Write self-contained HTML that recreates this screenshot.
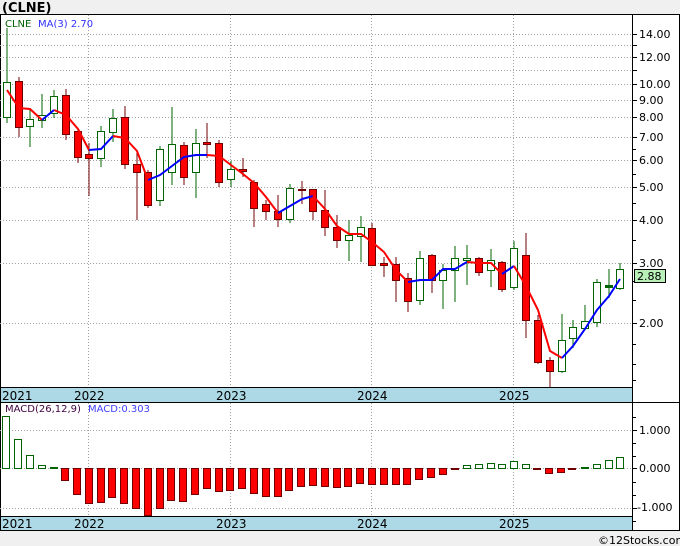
<!DOCTYPE html>
<html><head><meta charset="utf-8"><style>
html,body{margin:0;padding:0;background:#f0f0f0;width:680px;height:546px;overflow:hidden}
svg{display:block}
text{font-family:"DejaVu Sans","Liberation Sans",sans-serif}
</style></head><body>
<svg width="680" height="546" viewBox="0 0 680 546" xmlns="http://www.w3.org/2000/svg">
<rect x="0" y="0" width="680" height="546" fill="#f0f0f0"/>
<text x="2" y="12" font-size="13" font-weight="bold" fill="#000">(CLNE)</text>
<rect x="0.5" y="14.5" width="679" height="388" fill="#fff" stroke="#000"/>
<g stroke="#a0a0a0" stroke-dasharray="1,2" stroke-width="1">
<line x1="0" x2="632" y1="34.5" y2="34.5"/><line x1="0" x2="632" y1="45.5" y2="45.5"/><line x1="0" x2="632" y1="57.5" y2="57.5"/><line x1="0" x2="632" y1="70.5" y2="70.5"/><line x1="0" x2="632" y1="84.5" y2="84.5"/><line x1="0" x2="632" y1="100.5" y2="100.5"/><line x1="0" x2="632" y1="117.5" y2="117.5"/><line x1="0" x2="632" y1="137.5" y2="137.5"/><line x1="0" x2="632" y1="160.5" y2="160.5"/><line x1="0" x2="632" y1="187.5" y2="187.5"/><line x1="0" x2="632" y1="220.5" y2="220.5"/><line x1="0" x2="632" y1="263.5" y2="263.5"/><line x1="0" x2="632" y1="323.5" y2="323.5"/>
<line x1="88.5" x2="88.5" y1="15" y2="387"/><line x1="230.5" x2="230.5" y1="15" y2="387"/><line x1="371.5" x2="371.5" y1="15" y2="387"/><line x1="513.5" x2="513.5" y1="15" y2="387"/>
</g>
<line x1="632.5" x2="632.5" y1="14" y2="403" stroke="#000"/>
<g stroke="#000"><line x1="632" x2="637" y1="34.5" y2="34.5"/><line x1="632" x2="637" y1="45.5" y2="45.5"/><line x1="632" x2="637" y1="57.5" y2="57.5"/><line x1="632" x2="637" y1="70.5" y2="70.5"/><line x1="632" x2="637" y1="84.5" y2="84.5"/><line x1="632" x2="637" y1="100.5" y2="100.5"/><line x1="632" x2="637" y1="117.5" y2="117.5"/><line x1="632" x2="637" y1="137.5" y2="137.5"/><line x1="632" x2="637" y1="160.5" y2="160.5"/><line x1="632" x2="637" y1="187.5" y2="187.5"/><line x1="632" x2="637" y1="220.5" y2="220.5"/><line x1="632" x2="637" y1="263.5" y2="263.5"/><line x1="632" x2="637" y1="323.5" y2="323.5"/>
<line x1="632" x2="636" y1="149.5" y2="149.5"/><line x1="632" x2="636" y1="174.5" y2="174.5"/><line x1="632" x2="636" y1="203.5" y2="203.5"/><line x1="632" x2="636" y1="240.5" y2="240.5"/><line x1="632" x2="636" y1="281.5" y2="281.5"/><line x1="632" x2="636" y1="300.5" y2="300.5"/><line x1="632" x2="636" y1="344.5" y2="344.5"/><line x1="632" x2="636" y1="364.5" y2="364.5"/><line x1="632" x2="636" y1="380.5" y2="380.5"/></g>
<g font-size="11" fill="#000">
<text x="639" y="38">14.00</text><text x="639" y="61">12.00</text><text x="639" y="88">10.00</text><text x="639" y="104">9.00</text><text x="639" y="121">8.00</text><text x="639" y="141">7.00</text><text x="639" y="164">6.00</text><text x="639" y="191">5.00</text><text x="639" y="224">4.00</text><text x="639" y="267">3.00</text><text x="639" y="327">2.00</text>
</g>
<rect x="634.5" y="269.5" width="31" height="13" fill="#b8f0b8" stroke="#000"/>
<text x="637" y="280" font-size="11" fill="#000">2.88</text>
<text x="5" y="27" font-size="10" fill="#006400">CLNE</text>
<text x="38" y="27" font-size="10" fill="#3030ff">MA(3)  2.70</text>
<g stroke-width="1">
<g stroke="#006400" fill="#fff">
<line x1="7" x2="7" y1="28" y2="123"/><rect x="3.5" y="82.5" width="7" height="35"/>
<line x1="30" x2="30" y1="110" y2="147"/><rect x="26.5" y="119.5" width="7" height="7"/>
<line x1="42" x2="42" y1="94" y2="128"/><rect x="38.5" y="115.5" width="7" height="5"/>
<line x1="54" x2="54" y1="90" y2="118"/><rect x="50.5" y="96.5" width="7" height="17"/>
<line x1="101" x2="101" y1="126" y2="167"/><rect x="97.5" y="131.5" width="7" height="27"/>
<line x1="113" x2="113" y1="109" y2="142"/><rect x="109.5" y="118.5" width="7" height="14"/>
<line x1="160" x2="160" y1="146" y2="206"/><rect x="156.5" y="149.5" width="7" height="51"/>
<line x1="172" x2="172" y1="107" y2="185"/><rect x="168.5" y="144.5" width="7" height="28"/>
<line x1="196" x2="196" y1="129" y2="198"/><rect x="192.5" y="143.5" width="7" height="29"/>
<line x1="231" x2="231" y1="161" y2="187"/><rect x="227.5" y="169.5" width="7" height="10"/>
<line x1="290" x2="290" y1="184" y2="223"/><rect x="286.5" y="188.5" width="7" height="31"/>
<line x1="349" x2="349" y1="220" y2="261"/><rect x="345.5" y="235.5" width="7" height="5"/>
<line x1="361" x2="361" y1="216" y2="262"/><rect x="357.5" y="227.5" width="7" height="9"/>
<line x1="420" x2="420" y1="251" y2="305"/><rect x="416.5" y="258.5" width="7" height="42"/>
<line x1="443" x2="443" y1="264" y2="309"/><rect x="439.5" y="270.5" width="7" height="10"/>
<line x1="455" x2="455" y1="246" y2="302"/><rect x="451.5" y="258.5" width="7" height="12"/>
<line x1="467" x2="467" y1="245" y2="285"/><rect x="463.5" y="258.5" width="7" height="2"/>
<line x1="491" x2="491" y1="249" y2="287"/><rect x="487.5" y="260.5" width="7" height="10"/>
<line x1="514" x2="514" y1="241" y2="290"/><rect x="510.5" y="248.5" width="7" height="39"/>
<line x1="562" x2="562" y1="314" y2="373"/><rect x="558.5" y="340.5" width="7" height="31"/>
<line x1="573" x2="573" y1="320" y2="348"/><rect x="569.5" y="327.5" width="7" height="11"/>
<line x1="585" x2="585" y1="305" y2="330"/><rect x="581.5" y="321.5" width="7" height="7"/>
<line x1="597" x2="597" y1="279" y2="327"/><rect x="593.5" y="282.5" width="7" height="40"/>
<line x1="609" x2="609" y1="269" y2="298"/><rect x="605.5" y="285.5" width="7" height="2" fill="#006400"/>
<line x1="620" x2="620" y1="263" y2="290"/><rect x="616.5" y="269.5" width="7" height="19"/>
</g>
<g stroke="#700000" fill="#ff0000">
<line x1="19" x2="19" y1="77" y2="137"/><rect x="15.5" y="81.5" width="7" height="46"/>
<line x1="66" x2="66" y1="89" y2="140"/><rect x="62.5" y="95.5" width="7" height="39"/>
<line x1="78" x2="78" y1="128" y2="163"/><rect x="74.5" y="131.5" width="7" height="26"/>
<line x1="89" x2="89" y1="143" y2="196"/><rect x="85.5" y="154.5" width="7" height="4"/>
<line x1="125" x2="125" y1="106" y2="169"/><rect x="121.5" y="117.5" width="7" height="47"/>
<line x1="137" x2="137" y1="150" y2="220"/><rect x="133.5" y="164.5" width="7" height="8"/>
<line x1="148" x2="148" y1="170" y2="208"/><rect x="144.5" y="172.5" width="7" height="33"/>
<line x1="184" x2="184" y1="142" y2="185"/><rect x="180.5" y="145.5" width="7" height="32"/>
<line x1="207" x2="207" y1="123" y2="158"/><rect x="203.5" y="142.5" width="7" height="2"/>
<line x1="219" x2="219" y1="140" y2="187"/><rect x="215.5" y="143.5" width="7" height="39"/>
<line x1="243" x2="243" y1="158" y2="177"/><rect x="239.5" y="169.5" width="7" height="2"/>
<line x1="254" x2="254" y1="180" y2="227"/><rect x="250.5" y="182.5" width="7" height="26"/>
<line x1="266" x2="266" y1="200" y2="220"/><rect x="262.5" y="204.5" width="7" height="7"/>
<line x1="278" x2="278" y1="195" y2="227"/><rect x="274.5" y="211.5" width="7" height="8"/>
<line x1="302" x2="302" y1="181" y2="204"/><rect x="298.5" y="189.5" width="7" height="1"/>
<line x1="313" x2="313" y1="189" y2="220"/><rect x="309.5" y="189.5" width="7" height="22"/>
<line x1="325" x2="325" y1="190" y2="236"/><rect x="321.5" y="210.5" width="7" height="17"/>
<line x1="337" x2="337" y1="215" y2="248"/><rect x="333.5" y="227.5" width="7" height="13"/>
<line x1="372" x2="372" y1="223" y2="265"/><rect x="368.5" y="228.5" width="7" height="37"/>
<line x1="384" x2="384" y1="257" y2="277"/><rect x="380.5" y="263.5" width="7" height="2"/>
<line x1="396" x2="396" y1="257" y2="302"/><rect x="392.5" y="264.5" width="7" height="16"/>
<line x1="408" x2="408" y1="273" y2="312"/><rect x="404.5" y="278.5" width="7" height="23"/>
<line x1="432" x2="432" y1="254" y2="293"/><rect x="428.5" y="255.5" width="7" height="25"/>
<line x1="479" x2="479" y1="257" y2="276"/><rect x="475.5" y="258.5" width="7" height="14"/>
<line x1="502" x2="502" y1="261" y2="292"/><rect x="498.5" y="262.5" width="7" height="27"/>
<line x1="526" x2="526" y1="233" y2="338"/><rect x="522.5" y="255.5" width="7" height="65"/>
<line x1="538" x2="538" y1="315" y2="364"/><rect x="534.5" y="320.5" width="7" height="42"/>
<line x1="550" x2="550" y1="357" y2="387"/><rect x="546.5" y="360.5" width="7" height="11"/>
</g>
</g>
<polyline fill="none" stroke="#ff0000" stroke-width="2" points="7,90 19,108 30,109 42,120"/>
<polyline fill="none" stroke="#ff0000" stroke-width="2" points="54,110 66,115 78,129 89,150"/>
<polyline fill="none" stroke="#0000ff" stroke-width="2" points="42,120 54,110"/>
<polyline fill="none" stroke="#0000ff" stroke-width="2" points="89,150 101,149 113,136"/>
<polyline fill="none" stroke="#ff0000" stroke-width="2" points="113,136 125,138 137,151 148,180"/>
<polyline fill="none" stroke="#0000ff" stroke-width="2" points="148,180 160,175 172,166 184,157 196,155 207,155"/>
<polyline fill="none" stroke="#ff0000" stroke-width="2" points="207,155 219,156 231,165 243,174 254,183 266,197 278,213"/>
<polyline fill="none" stroke="#0000ff" stroke-width="2" points="278,213 290,206 302,199 313,196"/>
<polyline fill="none" stroke="#ff0000" stroke-width="2" points="313,196 325,209 337,226 349,234 361,234 372,242 384,252 396,270 408,282"/>
<polyline fill="none" stroke="#0000ff" stroke-width="2" points="408,282 420,280 432,280 443,269 455,269 467,262"/>
<polyline fill="none" stroke="#ff0000" stroke-width="2" points="467,262 479,263 491,263 502,274"/>
<polyline fill="none" stroke="#0000ff" stroke-width="2" points="502,274 514,266"/>
<polyline fill="none" stroke="#ff0000" stroke-width="2" points="514,266 526,286 538,310 550,351 562,358"/>
<polyline fill="none" stroke="#0000ff" stroke-width="2" points="562,358 573,346 585,329 597,310 609,296 620,279"/>
<rect x="0.5" y="387.5" width="632" height="15" fill="#add8e6" stroke="#000"/>
<g font-size="12" fill="#000"><text x="2" y="400">2021</text><text x="74" y="400">2022</text><text x="216" y="400">2023</text><text x="357" y="400">2024</text><text x="499" y="400">2025</text></g>
<rect x="0.5" y="402.5" width="679" height="128" fill="#fff" stroke="#000"/>
<g stroke="#a0a0a0" stroke-dasharray="1,2"><line x1="0" x2="632" y1="430.5" y2="430.5"/><line x1="0" x2="632" y1="468.5" y2="468.5"/><line x1="0" x2="632" y1="508.5" y2="508.5"/>
<line x1="88.5" x2="88.5" y1="403" y2="516"/><line x1="230.5" x2="230.5" y1="403" y2="516"/><line x1="371.5" x2="371.5" y1="403" y2="516"/><line x1="513.5" x2="513.5" y1="403" y2="516"/></g>
<line x1="632.5" x2="632.5" y1="402" y2="531" stroke="#000"/>
<g stroke="#000"><line x1="632" x2="637" y1="430.5" y2="430.5"/><line x1="632" x2="637" y1="468.5" y2="468.5"/><line x1="632" x2="637" y1="508.5" y2="508.5"/><line x1="632" x2="636" y1="417.5" y2="417.5"/><line x1="632" x2="636" y1="443.5" y2="443.5"/><line x1="632" x2="636" y1="456.5" y2="456.5"/><line x1="632" x2="636" y1="482.5" y2="482.5"/><line x1="632" x2="636" y1="495.5" y2="495.5"/><line x1="632" x2="636" y1="521.5" y2="521.5"/></g>
<g font-size="11" fill="#000"><text x="639" y="434">1.000</text><text x="639" y="472">0.000</text><text x="637" y="511">-1.000</text></g>
<text x="5" y="412" font-size="10" fill="#400040">MACD(26,12,9)</text>
<text x="88" y="412" font-size="10" fill="#4040ff">MACD:0.303</text>
<g stroke="#006400" fill="#fff">
<rect x="2.5" y="416.5" width="7" height="52"/><rect x="14.5" y="439.5" width="7" height="29"/><rect x="26.5" y="455.5" width="7" height="13"/><rect x="38.5" y="465.5" width="7" height="3"/><rect x="50.5" y="467.5" width="7" height="1" fill="#006400"/>
<rect x="463.5" y="465.5" width="7" height="3"/><rect x="475.5" y="464.5" width="7" height="4"/><rect x="487.5" y="463.5" width="7" height="5"/><rect x="498.5" y="464.5" width="7" height="4"/><rect x="510.5" y="461.5" width="7" height="7"/><rect x="522.5" y="464.5" width="7" height="4"/><rect x="581.5" y="467.5" width="7" height="1" fill="#006400"/><rect x="593.5" y="464.5" width="7" height="4"/><rect x="605.5" y="460.5" width="7" height="8"/><rect x="616.5" y="457.5" width="7" height="11"/>
</g>
<g stroke="#700000" fill="#ff0000">
<rect x="61.5" y="468.5" width="7" height="12"/><rect x="73.5" y="468.5" width="7" height="26"/><rect x="85.5" y="468.5" width="7" height="35"/><rect x="97.5" y="468.5" width="7" height="34"/><rect x="108.5" y="468.5" width="7" height="29"/><rect x="120.5" y="468.5" width="7" height="35"/><rect x="132.5" y="468.5" width="7" height="40"/><rect x="144.5" y="468.5" width="7" height="47"/><rect x="156.5" y="468.5" width="7" height="40"/><rect x="167.5" y="468.5" width="7" height="32"/><rect x="179.5" y="468.5" width="7" height="33"/><rect x="191.5" y="468.5" width="7" height="26"/><rect x="203.5" y="468.5" width="7" height="20"/><rect x="215.5" y="468.5" width="7" height="23"/><rect x="226.5" y="468.5" width="7" height="22"/><rect x="238.5" y="468.5" width="7" height="20"/><rect x="250.5" y="468.5" width="7" height="25"/><rect x="262.5" y="468.5" width="7" height="28"/><rect x="274.5" y="468.5" width="7" height="28"/><rect x="285.5" y="468.5" width="7" height="22"/><rect x="297.5" y="468.5" width="7" height="18"/><rect x="309.5" y="468.5" width="7" height="17"/><rect x="321.5" y="468.5" width="7" height="18"/><rect x="333.5" y="468.5" width="7" height="19"/><rect x="344.5" y="468.5" width="7" height="18"/><rect x="356.5" y="468.5" width="7" height="15"/><rect x="368.5" y="468.5" width="7" height="16"/><rect x="380.5" y="468.5" width="7" height="16"/><rect x="392.5" y="468.5" width="7" height="16"/><rect x="403.5" y="468.5" width="7" height="16"/><rect x="415.5" y="468.5" width="7" height="11"/><rect x="427.5" y="468.5" width="7" height="9"/><rect x="439.5" y="468.5" width="7" height="6"/><rect x="451.5" y="468.5" width="7" height="1" fill="#700000"/>
<rect x="533.5" y="468.5" width="7" height="1" fill="#700000"/><rect x="545.5" y="468.5" width="7" height="5"/><rect x="557.5" y="468.5" width="7" height="4"/><rect x="568.5" y="468.5" width="7" height="1" fill="#700000"/>
</g>
<rect x="0.5" y="516.5" width="632" height="14" fill="#add8e6" stroke="#000"/>
<g font-size="12" fill="#000"><text x="2" y="528">2021</text><text x="74" y="528">2022</text><text x="216" y="528">2023</text><text x="357" y="528">2024</text><text x="499" y="528">2025</text></g>
<text x="598" y="544" font-size="11" fill="#000">©12Stocks.com</text>
</svg>
</body></html>
